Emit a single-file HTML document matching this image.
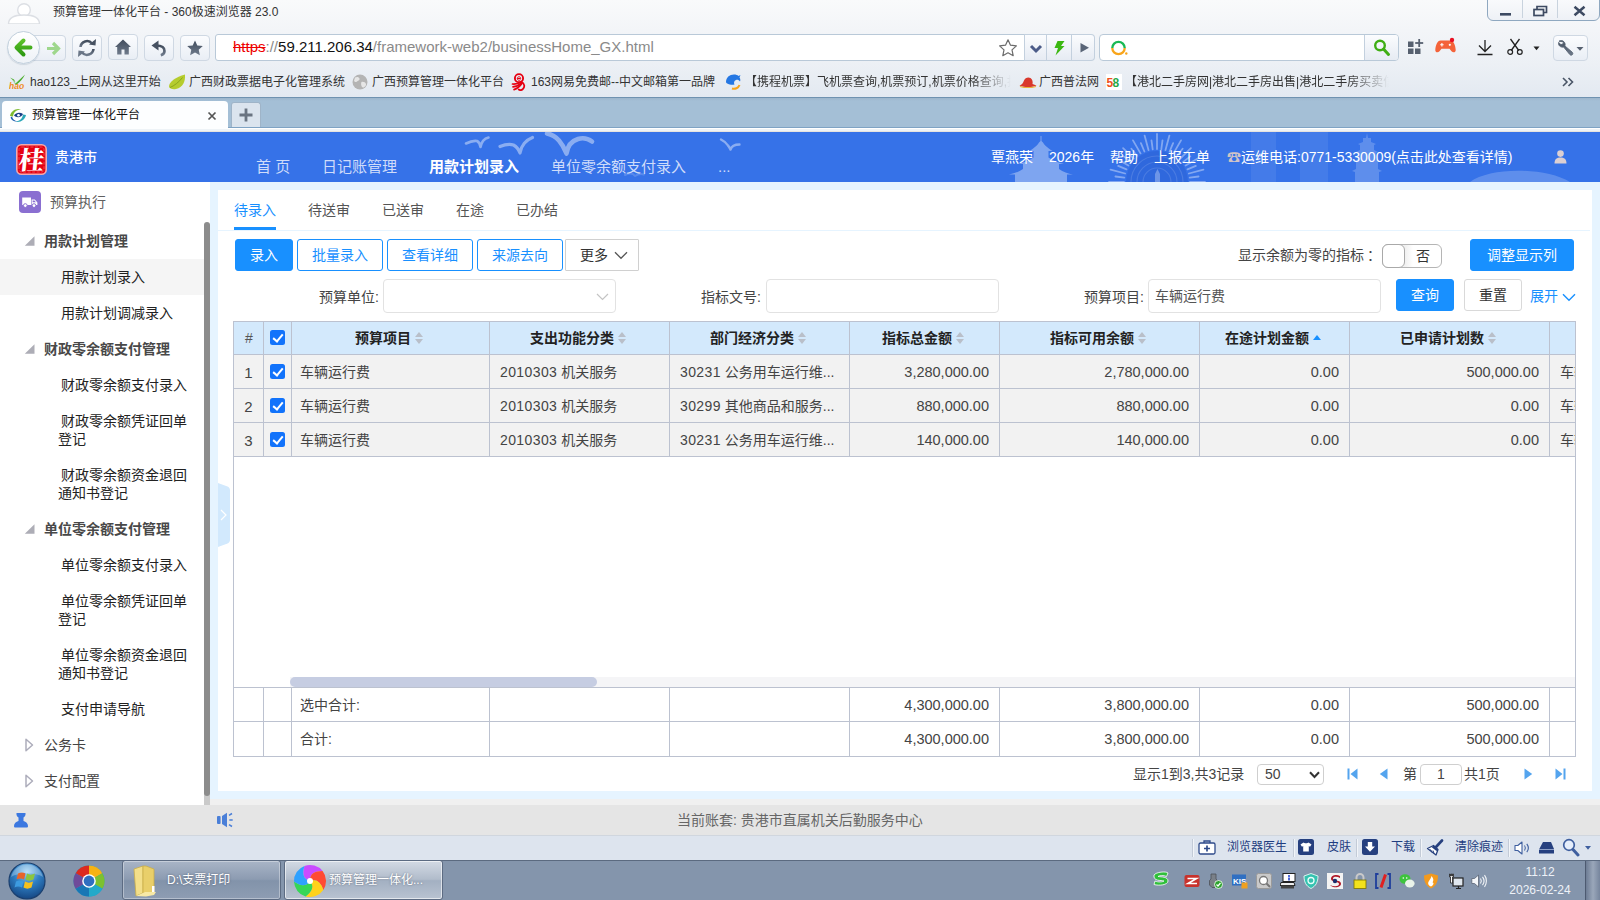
<!DOCTYPE html>
<html lang="zh-CN">
<head>
<meta charset="utf-8">
<title>预算管理一体化平台</title>
<style>
*{box-sizing:border-box;margin:0;padding:0}
html,body{width:1600px;height:900px;overflow:hidden;background:#fff}
body{font-family:"Liberation Sans","Noto Sans CJK SC",sans-serif;font-size:14px;color:#333;position:relative}
.abs{position:absolute}
#chrome{position:absolute;left:0;top:0;width:1600px;height:97px;background:linear-gradient(#f9fafb 0,#f3f5f8 30px,#ecf0f5 64px,#e3e9f1 97px)}
#title{position:absolute;left:53px;top:3px;font-size:12px;color:#333;line-height:18px;white-space:nowrap}
.nb{position:absolute;top:35px;height:26px;width:30px;border:1px solid #cfd8e3;border-radius:4px;background:linear-gradient(#fbfcfe,#e9eef5)}
#url{position:absolute;left:215px;top:34px;width:832px;height:27px;border:1px solid #b9c9d8;border-radius:3px 0 0 3px;background:#fff;font-size:15px;line-height:24px;padding-left:17px;white-space:nowrap;color:#8a8a8a}
#bm{position:absolute;left:0;top:72px;height:20px;font-size:12px;line-height:20px;color:#333;white-space:nowrap}
#bm span{position:absolute;top:0;white-space:nowrap}
#tabstrip{position:absolute;left:0;top:97px;width:1600px;height:31px;background:linear-gradient(#9db6cc,#a4bfd6 3px);border-top:1px solid #6f92b0;border-bottom:1px solid #7fa3c4}
#tabline{position:absolute;left:0;top:128px;width:1600px;height:4px;background:linear-gradient(#fff 1px,#eef3f7 1px,#eef3f7 3px,#e6e3df 3px)}
#tab{position:absolute;left:2px;top:101px;width:226px;height:28px;background:#fdfeff;border-radius:4px 4px 0 0;font-size:12px;line-height:28px;color:#111}
#newtab{position:absolute;left:231px;top:102px;width:30px;height:25px;background:#dbe4ee;border:1px solid #9fb4c8;border-bottom:none;border-radius:3px 3px 0 0}
#hdr{position:absolute;left:0;top:132px;width:1600px;height:50px;background:#3672e8;color:#fff;overflow:hidden}
#main{position:absolute;left:0;top:182px;width:1600px;height:623px;background:#e6f4ff}
#side{position:absolute;left:0;top:0;width:210px;height:623px;background:#fff}
#panel{position:absolute;left:218px;top:8px;width:1374px;height:601px;background:#fff}
#status{position:absolute;left:0;top:805px;width:1600px;height:30px;background:#e5e5e5}
#bstatus{position:absolute;left:0;top:835px;width:1600px;height:25px;background:#dde4ee;border-top:1px solid #d0d6de}
#taskbar{position:absolute;left:0;top:860px;width:1600px;height:40px;background:#8495ac;border-top:1px solid #5b6a80}

/* header */
#hdr .nav{position:absolute;top:25px;font-size:15px;line-height:20px;color:#cfdcfa;white-space:nowrap}
#hdr .nav.on{color:#fff;font-weight:bold}
#hdr .rt{position:absolute;top:15px;font-size:14px;line-height:20px;color:#fff;white-space:nowrap}
#city{position:absolute;left:55px;top:15px;font-size:14px;line-height:20px;color:#fff;font-weight:500}
/* sidebar */
#side .top{position:absolute;left:50px;top:10px;font-size:14px;line-height:20px;color:#606060}
#side .g{position:absolute;left:0;width:204px;height:36px;line-height:36px;padding-left:44px;font-size:14px;color:#484848;font-weight:bold;white-space:nowrap}
#side .g.c{font-weight:normal;color:#444}
#side .i{position:absolute;left:0;width:204px;padding:9px 14px 9px 58px;text-indent:3px;line-height:18px;font-size:14px;color:#222}
#side .i.sel{background:#f5f5f5}
#side .tri{position:absolute;left:25px;width:0;height:0}
#sbar{position:absolute;left:204px;top:0;width:6px;height:623px;background:linear-gradient(#fff 600px,#cacaca 600px)}
#sbar i{position:absolute;left:0;top:40px;width:6px;height:574px;background:#8c8c8c;border-radius:3px}
/* panel */
.tb{position:absolute;top:10px;font-size:14px;line-height:20px;color:#555;white-space:nowrap}
.tb.on{color:#1890ff}
.btn{position:absolute;height:32px;line-height:30px;font-size:14px;text-align:center;border:1px solid #1890ff;border-radius:3px;color:#1890ff;background:#fff;white-space:nowrap}
.btn.pri{background:#1890ff;color:#fff}
.btn.def{border-color:#d9d9d9;color:#333}
.lbl{position:absolute;font-size:14px;line-height:20px;color:#444;white-space:nowrap}
.inp{position:absolute;top:89px;width:233px;height:34px;border:1px solid #e2e2e2;border-radius:4px;background:#fff;font-size:14px;line-height:33px;padding-left:6px;color:#555}

/* grid */
#grid{position:absolute;left:15px;top:131px;width:1343px;height:436px;border:1px solid #bcc2d0;overflow:hidden;background:#fff}
#grid .r{position:absolute;left:0;width:1400px;height:34px}
#grid .r.h{top:0;height:33px;background:#d3e9fc;font-weight:bold;color:#222}
#grid .r.d{background:#f2f2f2}
#grid .r.d .c,#grid .r.f .c{line-height:35px}
#grid .num{font-size:14.5px!important}
.dg{letter-spacing:.4px}
#grid .c{position:absolute;top:0;height:100%;border-right:1px solid #bcc2d0;border-bottom:1px solid #bcc2d0;font-size:14px;line-height:33px;white-space:nowrap;overflow:hidden;color:#444;padding:0 10px}
#grid .r.h .c{text-align:center;color:#222;line-height:32px;padding:0 3px 0 0}
#grid .r.h .c i{display:inline-block;width:8px;height:12px;margin-left:4px;vertical-align:-1px;position:relative}
#grid .r.h .c i:before{content:"";position:absolute;left:0;top:0;border:4px solid transparent;border-top:0;border-bottom:5px solid #b9bfc9}
#grid .r.h .c i:after{content:"";position:absolute;left:0;top:7px;border:4px solid transparent;border-bottom:0;border-top:5px solid #b9bfc9}
#grid .r.h .c i.up:before{border-bottom-color:#1890ff;top:3px}
#grid .r.h .c i.up:after{display:none}
#grid .num{text-align:right}
#grid .r.last .c{border-bottom:none}
#grid .c.p8{padding-left:8px}
#grid .ctr{text-align:center;padding:0;font-size:15px!important}
.cb{position:absolute;left:6px;top:9px;width:15px;height:15px;background:#1273fb;border-radius:2.5px}
.cb:after{content:"";position:absolute;left:5px;top:2px;width:4px;height:8px;border:solid #fff;border-width:0 2px 2px 0;transform:rotate(40deg)}
#hs{position:absolute;left:56px;top:355px;width:1287px;height:10px;background:#f5f5f7}
#hsl{position:absolute;left:0;top:365px;width:1343px;height:1px;background:#bcc2d0}
#hs i{position:absolute;left:0;top:0;width:307px;height:10px;border-radius:5px;background:#c6cde2}

.sw{position:absolute;left:1164px;top:54px;width:60px;height:24px;border:1px solid #b5b5b5;border-radius:6px;background:linear-gradient(90deg,#f0f0f0 22px,#fff 30px);font-size:14px;line-height:22px;color:#333;padding-left:33px}
.sw i{position:absolute;left:-1px;top:-1px;width:23px;height:24px;border:1px solid #a9a9a9;border-radius:6px;background:#fff}
.pg{position:absolute;top:574px;font-size:14px;line-height:20px;color:#444;white-space:nowrap}
.pgbox{position:absolute;top:574px;height:21px;border:1px solid #cfcfcf;border-radius:4px;background:#fff;font-size:14px;line-height:19px;color:#444}

.nb svg{position:absolute;left:0;top:0}
#back{position:absolute;left:7px;top:31px;width:33px;height:33px;border:1px solid #c0cfdc;border-radius:50%;background:linear-gradient(#fff,#eef2f7);box-shadow:0 1px 1px rgba(120,140,160,.25)}
#fwd{position:absolute;left:23px;top:35px;width:43px;height:26px;border:1px solid #cfd8e3;border-radius:0 4px 4px 0;background:linear-gradient(#fafbfd,#e9eef5)}
.ub{position:absolute;top:34px;height:27px;border:1px solid #c3d0de;border-left:none;background:linear-gradient(#fbfcfe,#e6ebf3)}
#sbox{position:absolute;left:1099px;top:34px;width:300px;height:27px;border:1px solid #b9c9d8;border-radius:4px;background:#fff}
#sbtn{position:absolute;left:1364px;top:35px;width:34px;height:25px;border-left:1px solid #c3d0de;background:linear-gradient(#fbfcfe,#e6ebf3);border-radius:0 3px 3px 0}
#wc{position:absolute;left:1487px;top:-1px;width:113px;height:22px;border:1px solid #8fa8c0;border-radius:0 0 6px 6px;background:linear-gradient(#f9fafc,#eef1f6)}
#wc b{position:absolute;top:0;width:1px;height:18px;background:#c9d3de}
#bm img,#bm svg{position:absolute}
.fade{-webkit-mask-image:linear-gradient(90deg,#000 85%,transparent 100%);mask-image:linear-gradient(90deg,#000 85%,transparent 100%)}

#status .t{position:absolute;left:677px;top:5px;font-size:14px;line-height:20px;color:#666;white-space:nowrap}
#bstatus .t{position:absolute;top:1px;font-size:12px;line-height:20px;color:#1f3d80;white-space:nowrap}
#bstatus .sp{position:absolute;top:3px;width:1px;height:18px;background:#c3cbd7;border-right:1px solid #f2f5f9;box-sizing:content-box}
#bstatus svg,#taskbar svg{position:absolute}
.tkb{position:absolute;top:-1px;height:40px;width:159px;border:1px solid #5c6b82;border-radius:3px;background:linear-gradient(#a9b5c7,#8c9bb1 48%,#8293aa 52%,#8e9db3);box-shadow:inset 0 0 0 1px rgba(255,255,255,.35)}
.tkb.on{background:linear-gradient(#d3dae4,#b1bccb 48%,#a3b0c2 52%,#b9c3d1);box-shadow:inset 0 0 0 1px rgba(255,255,255,.6)}
.tkb span{position:absolute;top:10px;font-size:12px;line-height:18px;color:#fff;white-space:nowrap;text-shadow:0 0 2px rgba(40,50,70,.6)}
#clock{position:absolute;left:1500px;top:2px;width:80px;text-align:center;font-size:12px;line-height:18px;color:#eef2f8}
</style>
</head>
<body>
<div id="chrome">
  <svg class="abs" style="left:6px;top:2px" width="36" height="22" viewBox="0 0 36 22"><circle cx="18" cy="8" r="6.3" fill="#fff" stroke="#dcdfe4" stroke-width="1.4"/><path d="M2.5 22c0-6.5 6-9 15.500-9s15.500 2.500 15.500 9z" fill="#fff" stroke="#dcdfe4" stroke-width="1.4"/></svg>
  <div id="title">预算管理一体化平台 - 360极速浏览器 23.0</div>
  <div id="wc"><b style="left:34px"></b><b style="left:69px"></b>
    <svg class="abs" style="left:0;top:0" width="112" height="22" viewBox="0 0 112 22"><rect x="12" y="13" width="11" height="2.600" fill="#3d4a62"/><g fill="none" stroke="#3d4a62" stroke-width="1.700"><path d="M49 9.500v-3h9.500v6h-3"/><rect x="46" y="9.500" width="9.500" height="6"/></g><path d="M86.500 6.800 96.500 15.200M96.500 6.800 86.500 15.200" stroke="#3d4a62" stroke-width="2.500"/></svg>
  </div>
  <div id="fwd"><svg width="43" height="26" viewBox="0 0 43 26"><path d="M23 12.500h10M29 7l5.500 5.500L29 18" fill="none" stroke="#9ed78c" stroke-width="3.200" stroke-linejoin="miter"/></svg></div>
  <div id="back"><svg width="33" height="33" viewBox="0 0 33 33"><defs><linearGradient id="gg" x1="0" y1="0" x2="0" y2="1"><stop offset="0" stop-color="#5cc12a"/><stop offset="1" stop-color="#2e9a12"/></linearGradient></defs><path d="M22.500 15.500H9.500M15.500 8.500 8.500 15.500l7 7" fill="none" stroke="url(#gg)" stroke-width="4" stroke-linecap="round" stroke-linejoin="round"/></svg></div>
  <div class="nb" style="left:72px"><svg width="28" height="24" viewBox="0 0 28 24"><defs><linearGradient id="ig" x1="0" y1="0" x2="0" y2="1"><stop offset="0" stop-color="#414c5c"/><stop offset="1" stop-color="#6f7b8c"/></linearGradient></defs><path d="M7.500 11a6.500 6.500 0 0 1 11.500-3.500" fill="none" stroke="url(#ig)" stroke-width="2.600"/><path d="M16 8.500l6.500 1 .5-6.500z" fill="#465161"/><path d="M20.500 13a6.500 6.500 0 0 1-11.500 3.500" fill="none" stroke="url(#ig)" stroke-width="2.600"/><path d="M12 15.500l-6.500-1-.5 6.500z" fill="#6a7687"/></svg></div>
  <div class="nb" style="left:108px;top:34px"><svg width="28" height="24" viewBox="0 0 28 24"><defs><linearGradient id="ig" x1="0" y1="0" x2="0" y2="1"><stop offset="0" stop-color="#414c5c"/><stop offset="1" stop-color="#6f7b8c"/></linearGradient></defs><path d="M14 4.500 6 12h2.200v7.500h4.300v-5h3v5h4.300V12H22z" fill="url(#ig)"/></svg></div>
  <div class="nb" style="left:144px"><svg width="28" height="24" viewBox="0 0 28 24"><defs><linearGradient id="ig" x1="0" y1="0" x2="0" y2="1"><stop offset="0" stop-color="#414c5c"/><stop offset="1" stop-color="#6f7b8c"/></linearGradient></defs><path d="M11 9.500c5 0 8.500 1.800 8.500 5.500 0 2.200-1.500 3.600-3.700 4.200" fill="none" stroke="url(#ig)" stroke-width="2.600"/><path d="M13.500 4.500v10l-7-5z" fill="#465161"/></svg></div>
  <div class="nb" style="left:180px"><svg width="28" height="24" viewBox="0 0 28 24"><defs><linearGradient id="ig" x1="0" y1="0" x2="0" y2="1"><stop offset="0" stop-color="#414c5c"/><stop offset="1" stop-color="#6f7b8c"/></linearGradient></defs><path d="M14 4.500l2.300 5 5.500.6-4.100 3.700 1.200 5.400L14 16.400l-4.900 2.800 1.200-5.400-4.100-3.700 5.500-.6z" fill="url(#ig)"/></svg></div>
  <div id="url"><span style="color:#e00;text-decoration:line-through">https</span>://<span style="color:#111">59.211.206.34</span>/framework-web2/businessHome_GX.html
    <svg class="abs" style="left:782px;top:3px" width="20" height="20" viewBox="0 0 20 20"><path d="M10 1.800l2.500 5.400 5.900.7-4.400 4 1.200 5.800L10 14.800l-5.200 2.900L6 11.900l-4.400-4 5.900-.7z" fill="#fff" stroke="#6b6b6b" stroke-width="1.200" stroke-linejoin="round"/></svg>
  </div>
  <div class="ub" style="left:1024px;width:23px;left:1024px;border-left:1px solid #c3d0de"><svg width="22" height="25" viewBox="0 0 22 25"><path d="M6 11l5 5 5-5" fill="none" stroke="#4b5b88" stroke-width="3"/></svg></div>
  <div class="ub" style="left:1047px;width:25px"><svg width="24" height="25" viewBox="0 0 24 25"><path d="M10.500 6h7l-3.500 5h3.500L8.500 20.500 11 13H7.500z" fill="#3cb812"/></svg></div>
  <div class="ub" style="left:1072px;width:23px;border-radius:0 4px 4px 0"><svg width="22" height="25" viewBox="0 0 22 25"><path d="M8.500 8v9.500l8.500-4.700z" fill="#596577"/></svg></div>
  <div id="sbox"><svg class="abs" style="left:10px;top:4px" width="20" height="18" viewBox="0 0 20 18"><path d="M2.300 9a6.200 6.200 0 0 1 12.400 0" fill="none" stroke="#19b955" stroke-width="2.300"/><path d="M2.300 9a6.200 6.200 0 0 0 12.400 0" fill="none" stroke="#f8a51b" stroke-width="2.300"/><circle cx="16.300" cy="14.500" r="1.200" fill="#f8a51b"/></svg></div>
  <div id="sbtn"><svg width="34" height="25" viewBox="0 0 34 25"><circle cx="15" cy="10.500" r="4.800" fill="none" stroke="#3fae14" stroke-width="2.400"/><path d="M18.500 14l5 5.500" stroke="#3fae14" stroke-width="3" stroke-linecap="round"/></svg></div>
  <svg class="abs" style="left:1407px;top:39px" width="18" height="16" viewBox="0 0 18 16"><g fill="#56606f"><rect x="1" y="2.500" width="5.500" height="5.500"/><rect x="1" y="9.500" width="5.500" height="5.500"/><rect x="8" y="9.500" width="5.500" height="5.500"/><rect x="11.300" y="0" width="1.800" height="8"/><rect x="8.200" y="3.100" width="8" height="1.800"/></g></svg>
  <svg class="abs" style="left:1435px;top:37px" width="22" height="17" viewBox="0 0 22 17"><path d="M5.500 3.500h10c3 0 5 5 5.200 9.500.1 2.500-2.700 3-4.200 1.200l-2-2.400h-8l-2 2.400C3 16 .2 15.500.3 13 .5 8.500 2.500 3.500 5.500 3.500z" fill="#f4633a"/><path d="M5.200 7.800h3.400M6.900 6.100v3.400" stroke="#fff" stroke-width="1.100"/><circle cx="14.800" cy="7.800" r="1.100" fill="#fff"/><circle cx="17" cy="3" r="2.200" fill="#e81123"/></svg>
  <svg class="abs" style="left:1476px;top:39px" width="18" height="17" viewBox="0 0 18 17"><path d="M9 1v11.500M3 6.500l6 6 6-6M1.500 15.500h15" fill="none" stroke="#222" stroke-width="1.300"/></svg>
  <svg class="abs" style="left:1506px;top:38px" width="18" height="18" viewBox="0 0 18 18"><path d="M4.500 1 12.800 12.500M13.500 1 5.200 12.500" stroke="#222" stroke-width="1.300" fill="none"/><circle cx="4.200" cy="14" r="2.400" fill="none" stroke="#222" stroke-width="1.200"/><circle cx="13.800" cy="14" r="2.400" fill="none" stroke="#222" stroke-width="1.200"/></svg>
  <svg class="abs" style="left:1533px;top:46px" width="7" height="5" viewBox="0 0 7 5"><path d="M0.500 0.500h6L3.500 4.200z" fill="#222"/></svg>
  <div class="nb" style="left:1553px;width:35px"><svg width="33" height="24" viewBox="0 0 33 24"><defs><linearGradient id="ig" x1="0" y1="0" x2="0" y2="1"><stop offset="0" stop-color="#414c5c"/><stop offset="1" stop-color="#6f7b8c"/></linearGradient></defs><path d="M5 5.200c1.600-1 3.700-.8 5 .6 1.100 1.100 1.400 2.700.9 4.100l7.300 6.300c.8.700.8 1.800.1 2.500s-1.900.6-2.500-.2L9.600 11c-1.400.4-2.900 0-4-1-.9-1-1.300-2.300-1-3.600l2.300 2.200 2.100-.6.500-2.100z" fill="url(#ig)" stroke="#5a6575" stroke-width=".9" stroke-linejoin="round"/><path d="M22.500 11h7L26 14.800z" fill="#56606f"/></svg></div>
  <div id="bm">
    <svg style="left:9px;top:1px" width="18" height="17" viewBox="0 0 18 17"><path d="M3 7l3.500 3.500L16 1.500c-2 4-5 7.500-9 10.500L3 7z" fill="#4caf2f"/><path d="M1 4.500l4 2 1.500 3z" fill="#4caf2f"/><text x="0" y="16" font-family="Liberation Sans,sans-serif" font-size="8.500" font-style="italic" font-weight="bold" fill="#f08a24">hao</text></svg>
    <span style="left:30px">hao123_上网从这里开始</span>
    <svg style="left:168px;top:2px" width="18" height="16" viewBox="0 0 18 16"><path d="M17 .5c.5 7-2 13-9 14.500-3.500.7-6.500-.5-7-2C.5 8 8 3 17 .5z" fill="#b5cc2e"/><path d="M2 13.500C6 12 11 8 14.500 3.500" stroke="#8aa51c" stroke-width="1" fill="none"/></svg>
    <span style="left:189px">广西财政票据电子化管理系统</span>
    <svg style="left:352px;top:2px" width="16" height="16" viewBox="0 0 16 16"><circle cx="8" cy="8" r="7.500" fill="#b4b4b4"/><path d="M3 3.500c2-1 4-.5 4.500 1s-1 2-2.500 3-2 .5-3-.5zM9.500 8c2-.5 4 .5 4.500 2s-1.500 3.500-3 3.500-2.500-4-1.500-5.500z" fill="#e6e6e6"/></svg>
    <span style="left:372px">广西预算管理一体化平台</span>
    <svg style="left:511px;top:1px" width="16" height="18" viewBox="0 0 16 18"><circle cx="8" cy="5.200" r="4.100" fill="none" stroke="#e60012" stroke-width="1.900"/><path d="M6.300 5.500h3.400c0-2.300-3.400-2.300-3.400 0 0 1.900 2.200 2.300 3.300 1.200" fill="none" stroke="#e60012" stroke-width="1"/><g fill="none" stroke="#e60012" stroke-linecap="round"><path d="M1.500 11C5 11.300 8 10.400 10 8.800" stroke-width="1.700"/><path d="M2 13.800c3.500-.4 6.500-1.900 8.500-4" stroke-width="1.700"/><path d="M3 16.600c3-.9 6-3.300 8-6.300" stroke-width="1.700"/><path d="M10.300 8.800c3.400 1.400 3.900 5.400 1.400 7.400-1.200 1-3 1-4 .3" stroke-width="1.800"/></g></svg>
    <span style="left:531px">163网易免费邮--中文邮箱第一品牌</span>
    <svg style="left:724px;top:1px" width="18" height="17" viewBox="0 0 18 17"><path d="M2 9C2 4.500 5.500 1.500 10 1.500c2 0 3.500.5 4.500 1.500l2-1-1 2.500c1 1.500 1 3 .5 4-1-1.500-2.500-2-4-1.500-2 .7-2.500 3-1.500 4.500-4 1-8.500-1-8.500-2.500z" fill="#2577e3"/><path d="M8 15.500c3 1 6.500-.5 7.500-3.500" stroke="#f8a51b" stroke-width="2" fill="none"/></svg>
    <span class="fade" style="left:745px;width:266px;overflow:hidden">【携程机票】飞机票查询,机票预订,机票价格查询,打折</span>
    <svg style="left:1019px;top:4px" width="18" height="12" viewBox="0 0 18 12"><path d="M.5 9.500C3 9 4 7 5 4.500 6 2 9 .5 11.500 2c2 1.200 2.500 4 2 6l4 1.500c-5 2-12 2-17 0z" fill="#d9382c"/><path d="M1 10.500c5 1.500 11 1.500 16 0" stroke="#e9b23a" stroke-width="1.200" fill="none"/></svg>
    <span style="left:1039px">广西普法网</span>
    <svg style="left:1106px;top:2px" width="16" height="16" viewBox="0 0 16 16"><rect width="16" height="16" fill="#fff"/><text x="0.500" y="13" font-family="Liberation Sans,sans-serif" font-size="12" font-weight="bold" letter-spacing="-0.800"><tspan fill="#f0501e">5</tspan><tspan fill="#29a845">8</tspan></text></svg>
    <span class="fade" style="left:1125px;width:264px;overflow:hidden">【港北二手房网|港北二手房出售|港北二手房买卖信</span>
    <svg style="left:1562px;top:5px" width="12" height="10" viewBox="0 0 12 10"><path d="M1 1l4 4-4 4M6.500 1l4 4-4 4" fill="none" stroke="#4a5566" stroke-width="1.600"/></svg>
  </div>
</div>
<div id="tabstrip"></div>
<div id="tabline"></div>
<div id="tab"><svg class="abs" style="left:7px;top:6px" width="18" height="17" viewBox="0 0 18 17"><path d="M1 9C2 4 7 1 12 2.500 8 2.500 4.500 5 4 9.500z" fill="#7dbb2f"/><path d="M17 8c-1 5-6 8-11 6.500 4 0 7.500-2.500 8-7z" fill="#2aa7b8"/><path d="M1.500 10.500c1 3 4 4.500 7 4-3-.5-5-2.500-5.500-5z" fill="#1d5fb0"/><path d="M5 8.500c2-3 6-3.500 9-1.500-1 3-6 4.500-9 1.500z" fill="#1b3f86"/><circle cx="9.500" cy="8.300" r="1.300" fill="#fff"/></svg><span style="margin-left:30px">预算管理一体化平台</span><svg class="abs" style="left:205px;top:10px" width="10" height="10" viewBox="0 0 10 10"><path d="M1.500 1.500l7 7M8.500 1.500l-7 7" stroke="#555" stroke-width="1.700"/></svg></div>
<div id="newtab"><svg width="28" height="24" viewBox="0 0 28 24"><path d="M14 5.500v13M7.500 12h13" stroke="#6a7481" stroke-width="2.800"/></svg></div>
<div id="hdr">
  <svg class="abs" style="left:0;top:0" width="1600" height="50" viewBox="0 0 1600 50">
    <defs><filter id="bl" x="-20%" y="-20%" width="140%" height="140%"><feGaussianBlur stdDeviation=".7"/></filter></defs>
    <g fill="none" stroke="#fff" stroke-linecap="round" stroke-linejoin="round" opacity=".42" filter="url(#bl)">
      <path d="M466 11.500c4-2 8-3 11-2.500 2 1 3 3 3.500 6 1-5 4-8.500 8-9.500" stroke-width="2.600"/>
      <path d="M500 14.500c5-2 10-2.500 13.500-1.500 3 1.500 5 4 6.500 8 1-7 6-13 12.500-15.500" stroke-width="3.200"/>
      <path d="M547 1.500c5 1 9 3.500 12 7 3 3.500 5.500 8 7.500 13 1-7 5-12.500 11.500-14.500 5-1.500 10-.5 14 2.500" stroke-width="4.600"/>
      <path d="M721 7.500c3 1.500 5.500 3.500 7 6 1 1.500 2 2.500 2.500 4 1-3 4-5 9-5" stroke-width="2.400"/>
      <path d="M625 43c4-2 8-2 10 1 3-2 6-2.500 9-1.500" stroke-width="2" opacity=".4"/>
    </g>
    <path d="M1040.500 4v5l-1.500 1.500c-1 2-4 5-9.500 8.500h4v6.500c-4 3-9 5-15.500 6.500h5v5c-4 3-9 4.500-14 5.500h6v7.500h52V42.500h6c-5-1-10-2.500-14-5.500v-5h5c-6.500-1.500-11.500-3.500-15.500-6.500V19h4c-5.500-3.500-8.500-6.500-9.500-8.500L1041.500 9V4z" fill="#fff" fill-opacity=".36"/>
    <g fill="#fff" opacity=".2">
      
      <path d="M1367 1l1 5h3v4l5 2-2 1v5l4 2-2 1v6l4 2-2 1v7l4 2-3 1v10h-24V40l-3-1 4-2v-7l-2-1 4-2v-6l-2-1 4-2v-5l-2-1 5-2v-4h3z"/>
      
      <path d="M1470 50c20-15 75-15 100 0z" opacity="1.200"/>
      <path d="M0 0"/>
    </g>
    <g fill="#fff" opacity=".07"><rect x="1251" y="0" width="25" height="50"/><rect x="1300" y="0" width="28" height="50"/></g>
    <path d="M1124.0 50.0L1109.0 50.0M1124.3 45.7L1115.4 44.5M1125.1 41.5L1110.6 37.6M1126.5 37.4L1118.2 33.9M1128.4 33.5L1115.4 26.0M1130.8 29.9L1123.7 24.4M1133.7 26.7L1123.1 16.1M1136.9 23.8L1131.4 16.7M1140.5 21.4L1133.0 8.4M1144.4 19.5L1140.9 11.2M1148.5 18.1L1144.6 3.6M1152.7 17.3L1151.5 8.4M1157.0 17.0L1157.0 2.0M1161.3 17.3L1162.5 8.4M1165.5 18.1L1169.4 3.6M1169.6 19.5L1173.1 11.2M1173.5 21.4L1181.0 8.4M1177.1 23.8L1182.6 16.7M1180.3 26.7L1190.9 16.1M1183.2 29.9L1190.3 24.4M1185.6 33.5L1198.6 26.0M1187.5 37.4L1195.8 33.9M1188.9 41.5L1203.4 37.6M1189.7 45.7L1198.6 44.5M1190.0 50.0L1205.0 50.0" stroke="#fff" stroke-opacity=".38" stroke-width="1.800" stroke-linecap="round" fill="none"/>
    <path d="M1126 50a31 31 0 0 1 62 0z" fill="#2f68dd"/>
    <g fill="none" stroke="#fff" stroke-opacity=".13" stroke-width="1.200"><path d="M1131 50a26 26 0 0 1 52 0"/><path d="M1137 50a20 20 0 0 1 40 0"/><path d="M1143 50a14 14 0 0 1 28 0"/></g>
    <path d="M1155 50v-8l2.500-5 2.500 5v8z" fill="#fff" opacity=".3"/>
  </svg>
  <svg class="abs" style="left:16px;top:12px" width="31" height="31" viewBox="0 0 31 31"><rect x=".8" y=".8" width="29.400" height="29.400" rx="4.500" fill="#e60012" stroke="#f3a9ad" stroke-width="1.600"/><rect x="3" y="3" width="25" height="25" rx="2.500" fill="none" stroke="#ee5a62" stroke-width=".8" stroke-dasharray="3 1.500"/><text x="15.500" y="25" text-anchor="middle" font-family="Noto Serif CJK SC,Noto Sans CJK SC,serif" font-weight="900" font-size="25" fill="#fff" transform="skewX(-6)" style="transform-origin:15px 15px">桂</text></svg>
  <svg class="abs" style="left:1554px;top:18px" width="13" height="14" viewBox="0 0 13 14"><circle cx="6.500" cy="3.600" r="3.300" fill="#dccfd2"/><path d="M.5 13.500c0-4.500 2.500-6 6-6s6 1.500 6 6z" fill="#dccfd2"/></svg>
  <div id="city">贵港市</div>
  <div class="nav" style="left:256px">首 页</div>
  <div class="nav" style="left:322px">日记账管理</div>
  <div class="nav on" style="left:429px">用款计划录入</div>
  <div class="nav" style="left:551px">单位零余额支付录入</div>
  <div class="nav" style="left:718px">...</div>
  <div class="rt" style="left:991px">覃燕荣</div>
  <div class="rt" style="left:1049px">2026年</div>
  <div class="rt" style="left:1110px">帮助</div>
  <div class="rt" style="left:1154px">上报工单</div>
  <div class="rt" style="left:1227px"><span style="color:#cfc3c7">☎</span>运维电话:0771-5330009(点击此处查看详情)</div>
</div>
<div id="main">
  <div id="side">
<svg class="abs" style="left:19px;top:9px" width="22" height="22" viewBox="0 0 22 22"><rect width="22" height="22" rx="4" fill="#8a6fd1"/><path d="M3.200 6.500h8.800v7.500H3.200zM12.600 8.500h3.200l2.600 3v2.500h-5.800z" fill="#fff"/><path d="M13.600 9.500h1.800l1.500 1.800h-3.300z" fill="#8a6fd1"/><circle cx="6.300" cy="14.600" r="1.900" fill="#fff" stroke="#8a6fd1" stroke-width="1"/><circle cx="15" cy="14.600" r="1.900" fill="#fff" stroke="#8a6fd1" stroke-width="1"/></svg>
<svg class="abs" style="left:24px;top:54px" width="11" height="10" viewBox="0 0 11 10"><path d="M10.500 .3v9.400H.8z" fill="#adadb6"/></svg>
<svg class="abs" style="left:24px;top:162px" width="11" height="10" viewBox="0 0 11 10"><path d="M10.500 .3v9.400H.8z" fill="#adadb6"/></svg>
<svg class="abs" style="left:24px;top:342px" width="11" height="10" viewBox="0 0 11 10"><path d="M10.500 .3v9.400H.8z" fill="#adadb6"/></svg>
<svg class="abs" style="left:25px;top:556px" width="9" height="14" viewBox="0 0 9 14"><path d="M1 1.200 7.500 7 1 12.800z" fill="#fff" stroke="#adadbb" stroke-width="1.500" stroke-linejoin="round"/></svg>
<svg class="abs" style="left:25px;top:592px" width="9" height="14" viewBox="0 0 9 14"><path d="M1 1.200 7.500 7 1 12.800z" fill="#fff" stroke="#adadbb" stroke-width="1.500" stroke-linejoin="round"/></svg>
<div class="top">预算执行</div>
<div class="g" style="top:41px">用款计划管理</div>
<div class="i sel" style="top:77px">用款计划录入</div>
<div class="i" style="top:113px">用款计划调减录入</div>
<div class="g" style="top:149px">财政零余额支付管理</div>
<div class="i" style="top:185px">财政零余额支付录入</div>
<div class="i" style="top:221px">财政零余额凭证回单登记</div>
<div class="i" style="top:275px">财政零余额资金退回通知书登记</div>
<div class="g" style="top:329px">单位零余额支付管理</div>
<div class="i" style="top:365px">单位零余额支付录入</div>
<div class="i" style="top:401px">单位零余额凭证回单登记</div>
<div class="i" style="top:455px">单位零余额资金退回通知书登记</div>
<div class="i" style="top:509px">支付申请导航</div>
<div class="g c" style="top:545px">公务卡</div>
<div class="g c" style="top:581px">支付配置</div>
<div id="sbar"><i></i></div>
</div>
  <div class="abs" style="left:210px;top:617px;width:1390px;height:6px;background:#f0f0f0"></div>
  <svg class="abs" style="left:218px;top:301px;z-index:5" width="13" height="64" viewBox="0 0 13 64"><path d="M0 0l9.500 3.500c1.500.6 2.500 2 2.500 3.500v50c0 1.500-1 2.900-2.500 3.500L0 64z" fill="#d2e9fd"/><path d="M3 27l5 5-5 5" fill="none" stroke="#fff" stroke-width="1.200"/></svg>
  <div id="panel">
  <div class="tb on" style="left:16px">待录入</div>
  <div class="tb" style="left:90px">待送审</div>
  <div class="tb" style="left:164px">已送审</div>
  <div class="tb" style="left:238px">在途</div>
  <div class="tb" style="left:298px">已办结</div>
  <div class="abs" style="left:0;top:40px;width:1372px;height:1px;background:#e6f4ff"></div>
  <div class="abs" style="left:16px;top:37px;width:42px;height:3px;background:#1890ff"></div>
  <div class="btn pri" style="left:17px;top:49px;width:58px">录入</div>
  <div class="btn" style="left:79px;top:49px;width:86px">批量录入</div>
  <div class="btn" style="left:169px;top:49px;width:86px">查看详细</div>
  <div class="btn" style="left:259px;top:49px;width:86px">来源去向</div>
  <div class="btn def" style="left:347px;top:49px;width:74px;text-align:left;padding-left:14px;border-radius:1px;border-color:#d0d0d0">更多</div>
  <div class="lbl" style="left:1020px;top:55px">显示余额为零的指标<span style="padding-left:3px">：</span></div>
  <div class="btn pri" style="left:1252px;top:49px;width:104px">调整显示列</div>
  <div class="lbl" style="left:101px;top:97px">预算单位:</div>
  <div class="inp" style="left:165px;width:233px"></div>
  <div class="lbl" style="left:483px;top:97px">指标文号:</div>
  <div class="inp" style="left:548px"></div>
  <div class="lbl" style="left:866px;top:97px">预算项目:</div>
  <div class="inp" style="left:930px">车辆运行费</div>
  <div class="btn pri" style="left:1178px;top:89px;width:58px">查询</div>
  <div class="btn def" style="left:1246px;top:89px;width:58px">重置</div>
  <div class="lbl" style="left:1312px;top:96px;color:#1890ff">展开</div>
<div id="grid">
<div class="r h"><div class="c " style="left:0px;width:30px;font-weight:normal;color:#555;padding:0 0 0 1px">#</div><div class="c " style="left:30px;width:28px"><span class="cb" style="top:8px"></span></div><div class="c " style="left:58px;width:198px">预算项目<i></i></div><div class="c " style="left:256px;width:180px">支出功能分类<i></i></div><div class="c " style="left:436px;width:180px">部门经济分类<i></i></div><div class="c " style="left:616px;width:150px">指标总金额<i></i></div><div class="c " style="left:766px;width:200px">指标可用余额<i></i></div><div class="c " style="left:966px;width:150px">在途计划金额<i class="up"></i></div><div class="c " style="left:1116px;width:200px">已申请计划数<i></i></div><div class="c " style="left:1316px;width:60px"></div></div>
<div class="r d" style="top:33px"><div class="c ctr" style="left:0px;width:30px">1</div><div class="c ctr" style="left:30px;width:28px"><span class="cb"></span></div><div class="c p8" style="left:58px;width:198px">车辆运行费</div><div class="c " style="left:256px;width:180px"><span class="dg">2010303</span> 机关服务</div><div class="c " style="left:436px;width:180px"><span class="dg">30231</span> 公务用车运行维...</div><div class="c num" style="left:616px;width:150px">3,280,000.00</div><div class="c num" style="left:766px;width:200px">2,780,000.00</div><div class="c num" style="left:966px;width:150px">0.00</div><div class="c num" style="left:1116px;width:200px">500,000.00</div><div class="c " style="left:1316px;width:60px">车辆</div></div>
<div class="r d" style="top:67px"><div class="c ctr" style="left:0px;width:30px">2</div><div class="c ctr" style="left:30px;width:28px"><span class="cb"></span></div><div class="c p8" style="left:58px;width:198px">车辆运行费</div><div class="c " style="left:256px;width:180px"><span class="dg">2010303</span> 机关服务</div><div class="c " style="left:436px;width:180px"><span class="dg">30299</span> 其他商品和服务...</div><div class="c num" style="left:616px;width:150px">880,000.00</div><div class="c num" style="left:766px;width:200px">880,000.00</div><div class="c num" style="left:966px;width:150px">0.00</div><div class="c num" style="left:1116px;width:200px">0.00</div><div class="c " style="left:1316px;width:60px">车辆</div></div>
<div class="r d" style="top:101px"><div class="c ctr" style="left:0px;width:30px">3</div><div class="c ctr" style="left:30px;width:28px"><span class="cb"></span></div><div class="c p8" style="left:58px;width:198px">车辆运行费</div><div class="c " style="left:256px;width:180px"><span class="dg">2010303</span> 机关服务</div><div class="c " style="left:436px;width:180px"><span class="dg">30231</span> 公务用车运行维...</div><div class="c num" style="left:616px;width:150px">140,000.00</div><div class="c num" style="left:766px;width:200px">140,000.00</div><div class="c num" style="left:966px;width:150px">0.00</div><div class="c num" style="left:1116px;width:200px">0.00</div><div class="c " style="left:1316px;width:60px">车辆</div></div>
<div id="hs"><i></i></div><div id="hsl"></div>
<div class="r f" style="top:366px"><div class="c " style="left:0px;width:30px"></div><div class="c " style="left:30px;width:28px"></div><div class="c p8" style="left:58px;width:198px">选中合计:</div><div class="c " style="left:256px;width:180px"></div><div class="c " style="left:436px;width:180px"></div><div class="c num" style="left:616px;width:150px">4,300,000.00</div><div class="c num" style="left:766px;width:200px">3,800,000.00</div><div class="c num" style="left:966px;width:150px">0.00</div><div class="c num" style="left:1116px;width:200px">500,000.00</div><div class="c " style="left:1316px;width:60px"></div></div>
<div class="r f last" style="top:400px"><div class="c " style="left:0px;width:30px"></div><div class="c " style="left:30px;width:28px"></div><div class="c p8" style="left:58px;width:198px">合计:</div><div class="c " style="left:256px;width:180px"></div><div class="c " style="left:436px;width:180px"></div><div class="c num" style="left:616px;width:150px">4,300,000.00</div><div class="c num" style="left:766px;width:200px">3,800,000.00</div><div class="c num" style="left:966px;width:150px">0.00</div><div class="c num" style="left:1116px;width:200px">500,000.00</div><div class="c " style="left:1316px;width:60px"></div></div>
</div>
  <div class="sw"><i></i>否</div>
  <svg class="abs" style="left:396px;top:61px" width="14" height="9" viewBox="0 0 14 9"><path d="M1 1.2 7 7.3 13 1.2" fill="none" stroke="#555" stroke-width="1.3"/></svg>
  <svg class="abs" style="left:1344px;top:103px" width="14" height="9" viewBox="0 0 14 9"><path d="M1 1.2 7 7.3 13 1.2" fill="none" stroke="#1890ff" stroke-width="1.4"/></svg>
  <svg class="abs" style="left:378px;top:103px" width="13" height="8" viewBox="0 0 13 8"><path d="M1 1 6.5 6.5 12 1" fill="none" stroke="#c4c4c4" stroke-width="1.2"/></svg>
  <div class="pg" style="left:915px">显示1到3,共3记录</div>
  <div class="pgbox" style="left:1039px;width:67px;padding-left:7px">50<svg class="abs" style="left:51px;top:6px" width="11" height="8" viewBox="0 0 11 8"><path d="M1 1.2 5.5 6 10 1.2" fill="none" stroke="#333" stroke-width="2"/></svg></div>
  <svg class="abs" style="left:1129px;top:578px" width="11" height="12" viewBox="0 0 11 12"><path d="M0.5 0.5h2v11h-2zM10.5 0.5v11L3.5 6z" fill="#54a4ee"/></svg>
  <svg class="abs" style="left:1161px;top:578px" width="9" height="12" viewBox="0 0 9 12"><path d="M8.5 0.5v11L0.8 6z" fill="#54a4ee"/></svg>
  <div class="pg" style="left:1185px">第</div>
  <div class="pgbox" style="left:1202px;width:42px;text-align:center">1</div>
  <div class="pg" style="left:1246px">共1页</div>
  <svg class="abs" style="left:1306px;top:578px" width="9" height="12" viewBox="0 0 9 12"><path d="M0.5 0.5v11L8.2 6z" fill="#54a4ee"/></svg>
  <svg class="abs" style="left:1337px;top:578px" width="11" height="12" viewBox="0 0 11 12"><path d="M8.5 0.5h2v11h-2zM0.5 0.5v11L7.5 6z" fill="#54a4ee"/></svg>
</div>
</div>
<div id="status">
  <svg class="abs" style="left:13px;top:7px" width="16" height="17" viewBox="0 0 16 17"><path d="M3.500 1h9c.3 2-.5 3.500-2 4.500v3.500c2.500.8 4.500 2.500 4.500 5 0 1-.5 1.500-1.500 1.500h-11C1.500 15.500 1 15 1 14c0-2.500 2-4.200 4.500-5V5.500C4 4.500 3.200 3 3.500 1z" fill="#3c78e0"/></svg>
  <svg class="abs" style="left:216px;top:7px" width="18" height="16" viewBox="0 0 18 16"><rect x="1" y="4" width="3.600" height="8" rx="1" fill="#4a7fd8"/><path d="M6 4 11 .8v14.400L6 12z" fill="#4a7fd8"/><path d="M13 3.300l3-1.800M13.300 8h3.400M13 12.700l3 1.800" stroke="#4a7fd8" stroke-width="1.500"/></svg>
  <div class="t">当前账套: 贵港市直属机关后勤服务中心</div>
</div>
<div id="bstatus">
  <i class="sp" style="left:1192px"></i>
  <svg style="left:1198px;top:4px" width="18" height="15" viewBox="0 0 18 15"><rect x="1" y="3" width="16" height="11" rx="1.500" fill="#fff" stroke="#2e4a8a" stroke-width="1.300"/><path d="M6 3V1h6v2" fill="none" stroke="#2e4a8a" stroke-width="1.300"/><path d="M9 5.500v6M6 8.500h6" stroke="#2e4a8a" stroke-width="1.700"/></svg>
  <div class="t" style="left:1227px">浏览器医生</div>
  <i class="sp" style="left:1293px"></i>
  <svg style="left:1298px;top:3px" width="16" height="16" viewBox="0 0 16 16"><rect width="16" height="16" rx="2.500" fill="#26407f"/><path d="M5.500 3.500c.6 1 4.400 1 5 0l3 2-1.500 2.300-1.200-.7V12.500H5.200V7.100L4 7.800 2.500 5.500z" fill="#fff"/></svg>
  <div class="t" style="left:1327px">皮肤</div>
  <i class="sp" style="left:1356px"></i>
  <svg style="left:1362px;top:3px" width="16" height="16" viewBox="0 0 16 16"><rect width="16" height="16" rx="2.500" fill="#26407f"/><path d="M5.800 3h4.400v4.500h2.800L8 12.800 3 7.500h2.800z" fill="#fff"/></svg>
  <div class="t" style="left:1391px">下载</div>
  <i class="sp" style="left:1420px"></i>
  <svg style="left:1426px;top:3px" width="18" height="18" viewBox="0 0 18 18"><path d="M16 1.500 10 8" stroke="#26407f" stroke-width="2.600" stroke-linecap="round"/><path d="M7.500 6.500l4.500 4-2 5.500-8.500-6.500z" fill="#fff" stroke="#26407f" stroke-width="1.300" stroke-linejoin="round"/><path d="M7.500 6.500l4.500 4-1.500 1.500-4.800-3.700z" fill="#26407f"/><path d="M4.500 10.500l1.500 3M7 11.500l1 3" stroke="#26407f" stroke-width="1"/></svg>
  <div class="t" style="left:1455px">清除痕迹</div>
  <i class="sp" style="left:1508px"></i>
  <svg style="left:1514px;top:4px" width="17" height="16" viewBox="0 0 17 16"><path d="M1 5.500h2.800L8 2v12l-4.200-3.500H1z" fill="#fff" stroke="#3f5f9f" stroke-width="1.100" stroke-linejoin="round"/><path d="M10.500 5.500c1 1.500 1 3.500 0 5M12.800 3.800c1.800 2.400 1.800 6 0 8.400" fill="none" stroke="#3f5f9f" stroke-width="1.100"/></svg>
  <svg style="left:1538px;top:5px" width="17" height="13" viewBox="0 0 17 13"><path d="M5 1h8l3 7v4.500H1V8.500z" fill="#26407f"/><path d="M1 8.500h15" stroke="#8ea0c8" stroke-width="1"/></svg>
  <svg style="left:1562px;top:2px" width="18" height="19" viewBox="0 0 18 19"><circle cx="7" cy="7" r="5.300" fill="#e6eefb" stroke="#3f5f9f" stroke-width="1.700"/><path d="M11 11.500l5 5.500" stroke="#3f5f9f" stroke-width="3" stroke-linecap="round"/></svg>
  <svg style="left:1585px;top:10px" width="6" height="4" viewBox="0 0 6 4"><path d="M0 0h6L3 3.800z" fill="#3f5f9f"/></svg>
</div>
<div id="taskbar">
  <svg style="left:7px;top:0" width="40" height="40" viewBox="0 0 40 40"><defs><radialGradient id="orb" cx=".5" cy=".25" r=".8"><stop offset="0" stop-color="#9fd3f5"/><stop offset=".45" stop-color="#2f7fc4"/><stop offset="1" stop-color="#123f7a"/></radialGradient></defs><circle cx="20" cy="20" r="18" fill="url(#orb)" stroke="#1b3f6e" stroke-width="1.200"/><path d="M4 16a16.500 16.500 0 0 1 32 0c-8-5-24-5-32 0z" fill="#fff" opacity=".28"/><path d="M11 12.500c2.500-1.500 5-1.500 7.500 0l-1.500 6c-2.500-1.500-5-1.500-7.500 0z" fill="#e8642a"/><path d="M20 12.500c2.500 1.500 5 1.500 8 0l-1.500 6c-3 1.500-5.500 1.500-8 0z" fill="#8cc63e"/><path d="M9 20.500c2.500-1.500 5-1.500 7.500 0l-1.500 6c-2.500-1.500-5-1.500-7.500 0z" fill="#3d9be0"/><path d="M18 20.500c2.500 1.500 5 1.500 8 0l-1.500 6c-3 1.500-5.500 1.500-8 0z" fill="#f6c11e"/></svg>
  <svg style="left:73px;top:4px" width="32" height="32" viewBox="0 0 32 32"><circle cx="16" cy="16" r="15.500" fill="#1aa3c9"/><path d="M16 16 2.600 8.200A15.500 15.500 0 0 1 16 .5z" fill="#dd2a1f"/><path d="M16 16V.5a15.500 15.500 0 0 1 13.400 7.700z" fill="#f7b212"/><path d="M16 16l13.400-7.800a15.500 15.500 0 0 1 0 15.600z" fill="#7cc12f"/><path d="M16 16l13.400 7.800A15.500 15.500 0 0 1 16 31.500z" fill="#23a9c9"/><path d="M16 16v15.500A15.500 15.500 0 0 1 2.600 23.800z" fill="#1877b5"/><path d="M16 16 2.600 23.800a15.500 15.500 0 0 1 0-15.600z" fill="#6f4b9a"/><circle cx="16" cy="16" r="6.800" fill="#fff"/><circle cx="16" cy="16" r="5.400" fill="#2f6fc0"/></svg>
  <div class="tkb" style="left:122px"><svg style="left:10px;top:4px" width="26" height="32" viewBox="0 0 26 32"><path d="M1 4l9-3v27l-7 3z" fill="#f3df8a" stroke="#c9ad4a" stroke-width=".8"/><path d="M10 1h3l8 3v25l-11-1z" fill="#e9cf6a" stroke="#c9ad4a" stroke-width=".8"/><path d="M3 31l9-4h11l-2 3-8 1.500z" fill="#f7e9a6"/><rect x="19" y="21" width="2.500" height="6" fill="#fff"/></svg><span style="left:44px">D:\支票打印</span></div>
  <div class="tkb on" style="left:284px"><svg style="left:8px;top:3px" width="34" height="34" viewBox="-17 -17 34 34"><path d="M0 0Q-9.6 -2.6 -5.5 -15.0A16 16 0 0 1 12.6 -9.9Q-0.5 -9.9 0 0z" fill="#c94bff"/><path d="M0 0Q-0.5 -9.9 12.6 -9.9A16 16 0 0 1 13.3 8.9Q9.3 -3.6 0 0z" fill="#ff4a33"/><path d="M0 0Q9.3 -3.6 13.3 8.9A16 16 0 0 1 -4.4 15.4Q6.2 7.7 0 0z" fill="#ffd21a"/><path d="M0 0Q6.2 7.7 -4.4 15.4A16 16 0 0 1 -16.0 0.6Q-5.4 8.3 0 0z" fill="#36d657"/><path d="M0 0Q-5.4 8.3 -16.0 0.6A16 16 0 0 1 -5.5 -15.0Q-9.6 -2.6 0 0z" fill="#2ea1ff"/><circle r="3" fill="#fff"/></svg><span style="left:44px">预算管理一体化...</span></div>
  <svg style="left:1152px;top:9px" width="18" height="18" viewBox="0 0 18 18"><path d="M2 5C4 2 14 1 16 3l-1.500 3.500C12 5 7 5.500 6 6.500c3 .5 10 0 10 4.500 0 4-9 5-14 3.500l1-3.500c3 1.500 8 1 9 0-3-1-11 .5-10-6z" fill="#2fbf3a" stroke="#fff" stroke-width=".8"/></svg><svg style="left:1184px;top:12px" width="16" height="16" viewBox="0 0 16 16"><rect x="0.500" y="2" width="15" height="12" rx="2" fill="#c8322c"/><path d="M3.500 5.500h9L4 10.500h9" fill="none" stroke="#fff" stroke-width="1.600"/></svg><svg style="left:1207px;top:12px" width="16" height="16" viewBox="0 0 16 16"><path d="M4 1h5v5l1.500 1.500V12L8 14.500H5L2.500 12V7.500L4 6z" fill="#7a8088" stroke="#4c5158" stroke-width=".8"/><circle cx="11.500" cy="11.500" r="4" fill="#2ea32e" stroke="#fff" stroke-width=".8"/><path d="M9.500 11.500l1.500 1.500 2.500-3" stroke="#fff" stroke-width="1.200" fill="none"/></svg><svg style="left:1232px;top:12px" width="16" height="16" viewBox="0 0 16 16"><rect x="0" y="1.500" width="14" height="11" fill="#2f6fc2"/><text x="1" y="10.500" font-family="Liberation Sans,sans-serif" font-size="8" font-weight="bold" fill="#fff">KIS</text><rect x="9.500" y="9.500" width="6" height="6" fill="#f0a020"/></svg><svg style="left:1256px;top:12px" width="16" height="16" viewBox="0 0 16 16"><rect x="0.500" y="0.500" width="15" height="15" rx="2" fill="#c9c9c9" stroke="#9a9a9a"/><circle cx="7.500" cy="7.500" r="4" fill="#fff" stroke="#777" stroke-width="1.300"/><path d="M10.500 10.500l3.500 3.500" stroke="#777" stroke-width="2"/></svg><svg style="left:1280px;top:12px" width="16" height="16" viewBox="0 0 16 16"><rect x="3" y="0.500" width="12" height="8" fill="#fff" stroke="#222" stroke-width="1"/><circle cx="9" cy="3" r="1" fill="#1c3fd0"/><rect x="8.200" y="4.500" width="1.600" height="3" fill="#1c3fd0"/><path d="M1 9.500h13l1 3H0z" fill="#eee" stroke="#222"/><rect x="1" y="12.500" width="13" height="3" fill="#444"/></svg><svg style="left:1303px;top:12px" width="16" height="16" viewBox="0 0 16 16"><path d="M8 .5l7 2.500c0 6-2 10-7 12.500C3 13 1 9 1 3z" fill="#35c2b0" stroke="#d9f4ef" stroke-width="1"/><circle cx="8" cy="7.500" r="3" fill="none" stroke="#e8fffb" stroke-width="1.300"/></svg><svg style="left:1327px;top:12px" width="16" height="16" viewBox="0 0 16 16"><rect width="16" height="16" fill="#f3f3f3"/><path d="M13 3C9 1 4 2.500 4 6c0 3 8 2 8 5 0 2.500-5 3-9 1 3 3.500 11 3 11-1.500 0-3.500-8-2.500-8-5 0-2 4-2.500 7-.5z" fill="#b01a2a"/><circle cx="8" cy="8" r="2.200" fill="#1c2d6b"/></svg><svg style="left:1352px;top:12px" width="16" height="16" viewBox="0 0 16 16"><path d="M4.500 7V4.500a3.500 3.500 0 0 1 7 0V7" fill="none" stroke="#c9c9c9" stroke-width="2"/><rect x="2" y="7" width="12" height="8.500" fill="#f2e21c" stroke="#7a7200" stroke-width=".8"/></svg><svg style="left:1375px;top:12px" width="16" height="16" viewBox="0 0 16 16"><path d="M3.500 1H1v14h2.500M12.500 1H15v14h-2.500" fill="none" stroke="#1f3e9c" stroke-width="1.800"/><path d="M10.500 1.500 6 14.500" stroke="#e02020" stroke-width="3"/></svg><svg style="left:1399px;top:12px" width="16" height="16" viewBox="0 0 16 16"><ellipse cx="6" cy="6" rx="5.500" ry="4.800" fill="#3dc43d"/><ellipse cx="10.800" cy="10.500" rx="4.800" ry="4" fill="#e9f3e9"/><circle cx="4.300" cy="5" r=".8" fill="#fff"/><circle cx="7.700" cy="5" r=".8" fill="#fff"/></svg><svg style="left:1423px;top:12px" width="16" height="16" viewBox="0 0 16 16"><path d="M8 .5l7 2c0 6.500-2 10.500-7 13C3 13 1 9 1 2.500z" fill="#f39a1e"/><path d="M8.500 3c2 2.500 2.500 4 1 6.500 1.500 0 1.500 2.500-1.500 4-3-1-3.500-3.500-2-5.500C7 6.500 8 5 8.500 3z" fill="#fff"/></svg><svg style="left:1448px;top:12px" width="16" height="16" viewBox="0 0 16 16"><rect x="5" y="5" width="10" height="8" fill="#dfe6ee" stroke="#222" stroke-width="1.200"/><path d="M8 15.500h5M10.500 13v2.500" stroke="#222" stroke-width="1.200"/><path d="M1.500 1v3h1v6h2V4h1V1h-1v2h-.8V1h-.7v2h-.7V1z" fill="#fff" stroke="#222" stroke-width=".8"/></svg><svg style="left:1471px;top:12px" width="16" height="16" viewBox="0 0 16 16"><path d="M.8 5.500h2.700L7.500 2v12l-4-3.500H.8z" fill="#f4f6f9" stroke="#5a6475" stroke-width=".8"/><path d="M9.500 5.500c1 1.500 1 3.500 0 5M11.500 3.800c1.800 2.400 1.800 6 0 8.400M13.500 2.200c2.500 3.300 2.500 8.300 0 11.600" fill="none" stroke="#f4f6f9" stroke-width="1.100"/></svg>
  <div id="clock">11:12<br>2026-02-24</div>
  <div class="abs" style="left:1585px;top:0;width:15px;height:40px;border-left:1px solid #4d5a70;background:linear-gradient(90deg,#6d7c94,#9aa7ba 50%,#76859d)"></div>
</div>
</body>
</html>
